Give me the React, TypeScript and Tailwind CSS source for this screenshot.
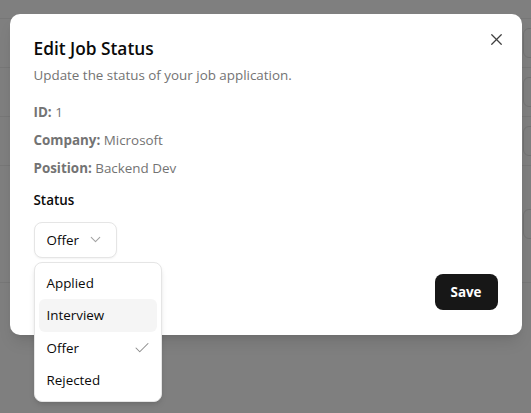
import { Check, ChevronDown, X } from "lucide-react";

const font = { fontFamily: '"Open Sans", "Noto Sans", sans-serif' };

const options = ["Applied", "Interview", "Offer", "Rejected"];

function BackgroundRow({ height }: { height: string }) {
  return (
    <div className={`flex items-center justify-end border-b border-[#eeeeee] ${height}`}>
      <div className="-mr-[56px] h-[30px] w-16 shrink-0 rounded-md border border-[#e5e5e5] bg-white" />
    </div>
  );
}

function StatusSelect() {
  return (
    <div className="relative w-fit">
      <button className="flex h-9 items-center gap-2 rounded-lg border border-[#e5e5e5] bg-white px-3 text-[13.4px] text-[#0a0a0a] shadow-xs">
        <span>Offer</span>
        <ChevronDown size={17} strokeWidth={1.5} className="text-[#a3a3a3]" />
      </button>
      <div className="absolute left-0 top-full z-10 mt-1 w-32 rounded-lg border border-[#e5e5e5] bg-white p-1 shadow-md">
        {options.map((option) => (
          <div
            key={option}
            className={`relative flex h-[32.5px] items-center rounded-md px-2 text-[13.4px] text-[#0a0a0a] ${
              option === "Interview" ? "bg-[#f5f5f5]" : ""
            }`}
          >
            {option}
            {option === "Offer" ? (
              <Check
                size={18}
                strokeWidth={1.4}
                className="absolute right-[6px] text-[#8a8a8a]"
              />
            ) : null}
          </div>
        ))}
      </div>
    </div>
  );
}

export default function App() {
  return (
    <div className="relative h-[413px] w-[531px] overflow-hidden bg-white" style={font}>
      {/* page behind the dialog */}
      <div className="flex flex-col">
        <div className="h-[19px] border-b border-[#eeeeee]" />
        <BackgroundRow height="h-[49px]" />
        <BackgroundRow height="h-[49px]" />
        <BackgroundRow height="h-[49px]" />
        <BackgroundRow height="h-[117px]" />
      </div>

      {/* overlay */}
      <div className="absolute inset-0 flex justify-center bg-black/50 pt-[14px]">
        <div className="relative flex h-fit w-full max-w-lg flex-col gap-4 rounded-[10px] bg-white px-6 pb-[25px] pt-[26px] shadow-lg">
          <button className="absolute right-4 top-4 text-[#404040]">
            <X size={19} strokeWidth={1.6} />
          </button>

          <div className="flex flex-col gap-2">
            <h2 className="text-[17.3px] font-semibold leading-none text-[#0a0a0a]">
              Edit Job Status
            </h2>
            <p className="text-[13.4px] leading-5 text-[#737373]">
              Update the status of your job application.
            </p>
          </div>

          <div className="mt-px flex flex-col gap-4">
            <div className="flex flex-col gap-2 text-[13.4px] leading-5 text-[#737373]">
              <p>
                <span className="font-bold">ID:</span> 1
              </p>
              <p>
                <span className="font-bold">Company:</span> Microsoft
              </p>
              <p>
                <span className="font-bold">Position:</span> Backend Dev
              </p>
            </div>
            <div className="flex flex-col gap-[14px]">
              <label className="text-[13.4px] font-semibold leading-none text-[#0a0a0a]">
                Status
              </label>
              <StatusSelect />
            </div>
          </div>

          <div className="flex justify-end">
            <button className="h-9 rounded-lg bg-[#171717] px-4 text-[13.4px] font-bold text-white">
              Save
            </button>
          </div>
        </div>
      </div>
    </div>
  );
}
